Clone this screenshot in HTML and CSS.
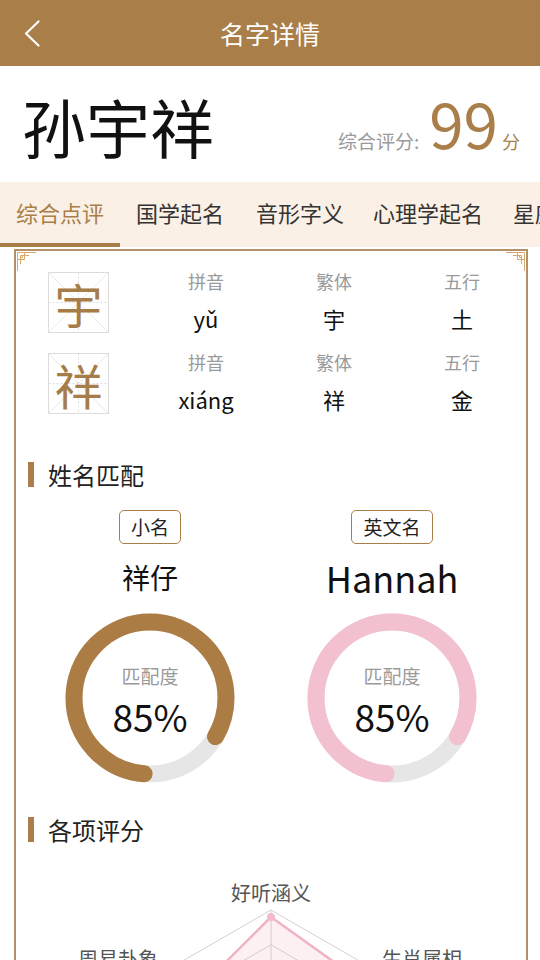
FILE: index.html
```html
<!DOCTYPE html>
<html lang="zh-CN">
<head>
<meta charset="utf-8">
<title>名字详情</title>
<link rel="stylesheet" href="styles.css">
</head>
<body>
<div class="page">
  <header class="topbar">
    <div class="back">
      <svg width="16" height="27" viewBox="0 0 16 27"><polyline points="14.5,1.5 2,13.5 14.5,25.5" fill="none" stroke="#fff" stroke-width="2.2" stroke-linecap="round" stroke-linejoin="round"/></svg>
    </div>
    <h1 class="title">名字详情</h1>
    <div></div>
  </header>

  <section class="hero">
    <div class="fullname">孙宇祥</div>
    <div class="score"><span class="score-label">综合评分:</span><span class="score-num">99</span><span class="score-unit">分</span></div>
  </section>

  <nav class="tabs">
    <span class="tab active">综合点评</span>
    <span class="tab">国学起名</span>
    <span class="tab">音形字义</span>
    <span class="tab tab-long">心理学起名</span>
    <span class="tab">星座起名</span>
  </nav>

  <main class="card">
    <svg class="corner tl" width="22" height="22" viewBox="0 0 22 22"><path d="M1.5 20V1.5H20M4.5 13V4.5H13M1.5 8.5H8.5V1.5M4.5 6.5H6.5V4.5" fill="none" stroke="#D8A76C" stroke-width="1"/></svg>
    <svg class="corner tr" width="22" height="22" viewBox="0 0 22 22"><path d="M1.5 20V1.5H20M4.5 13V4.5H13M1.5 8.5H8.5V1.5M4.5 6.5H6.5V4.5" fill="none" stroke="#D8A76C" stroke-width="1"/></svg>

    <div class="char-row">
      <div class="char-box">
        <svg class="grid" width="61" height="61" viewBox="0 0 61 61"><rect x="0.5" y="0.5" width="60" height="60" fill="none" stroke="#dcdcdc"/><path d="M0.5 0.5L60.5 60.5M60.5 0.5L0.5 60.5" stroke="#e8e8e8" stroke-width="1"/><path d="M30.5 0.5V60.5M0.5 30.5H60.5" stroke="#dcdcdc" stroke-width="1" stroke-dasharray="2 2"/></svg>
        <span class="char">宇</span>
      </div>
      <div class="attrs">
        <div class="attr"><div class="attr-label">拼音</div><div class="attr-value">yǔ</div></div>
        <div class="attr"><div class="attr-label">繁体</div><div class="attr-value">宇</div></div>
        <div class="attr"><div class="attr-label">五行</div><div class="attr-value">土</div></div>
      </div>
    </div>
    <div class="char-row">
      <div class="char-box">
        <svg class="grid" width="61" height="61" viewBox="0 0 61 61"><rect x="0.5" y="0.5" width="60" height="60" fill="none" stroke="#dcdcdc"/><path d="M0.5 0.5L60.5 60.5M60.5 0.5L0.5 60.5" stroke="#e8e8e8" stroke-width="1"/><path d="M30.5 0.5V60.5M0.5 30.5H60.5" stroke="#dcdcdc" stroke-width="1" stroke-dasharray="2 2"/></svg>
        <span class="char">祥</span>
      </div>
      <div class="attrs">
        <div class="attr"><div class="attr-label">拼音</div><div class="attr-value">xiáng</div></div>
        <div class="attr"><div class="attr-label">繁体</div><div class="attr-value">祥</div></div>
        <div class="attr"><div class="attr-label">五行</div><div class="attr-value">金</div></div>
      </div>
    </div>

    <h2 class="sec-title first">姓名匹配</h2>
    <div class="match">
      <div class="match-col">
        <span class="tag">小名</span>
        <div class="match-name">祥仔</div>
        <div class="ring">
          <svg width="170" height="170" viewBox="0 0 170 170"><circle cx="85" cy="85" r="76" fill="none" stroke="#E6E6E6" stroke-width="17"/><circle cx="85" cy="85" r="76" fill="none" stroke="#AB7D45" stroke-width="17" stroke-linecap="round" stroke-dasharray="392 478" stroke-dashoffset="-6" transform="rotate(90 85 85)"/></svg>
          <div class="ring-text"><div class="ring-label">匹配度</div><div class="ring-value">85%</div></div>
        </div>
      </div>
      <div class="match-col">
        <span class="tag">英文名</span>
        <div class="match-name en">Hannah</div>
        <div class="ring">
          <svg width="170" height="170" viewBox="0 0 170 170"><circle cx="85" cy="85" r="76" fill="none" stroke="#E6E6E6" stroke-width="17"/><circle cx="85" cy="85" r="76" fill="none" stroke="#F2C0CE" stroke-width="17" stroke-linecap="round" stroke-dasharray="392 478" stroke-dashoffset="-6" transform="rotate(90 85 85)"/></svg>
          <div class="ring-text"><div class="ring-label">匹配度</div><div class="ring-value">85%</div></div>
        </div>
      </div>
    </div>

    <h2 class="sec-title second">各项评分</h2>
    <svg class="radar" width="510" height="320" viewBox="0 0 510 320">
      <g fill="none" stroke="#d2d2d2" stroke-width="1">
        <polygon points="255,61 355.5,119 355.5,235 255,293 154.5,235 154.5,119"/>
        <polygon points="255,95.8 325.3,136.4 325.3,217.6 255,258.2 184.7,217.6 184.7,136.4"/>
        <polygon points="255,130.6 295.2,153.8 295.2,200.2 255,223.4 214.8,200.2 214.8,153.8"/>
        <path d="M255 177L255 61M255 177L355.5 119M255 177L355.5 235M255 177L255 293M255 177L154.5 235M255 177L154.5 119"/>
      </g>
      <polygon points="255,68 339.4,128.3 335.4,223.4 255,264 184.7,217.6 185.7,137" fill="rgba(240,170,190,0.18)" stroke="#F0B3C4" stroke-width="2.5" stroke-linejoin="round"/>
      <circle cx="255" cy="68" r="4" fill="#F2BACA"/>
      <g class="radar-label">
        <text x="255" y="43" text-anchor="middle" dominant-baseline="central">好听涵义</text>
        <text x="366" y="109" text-anchor="start" dominant-baseline="central">生肖属相</text>
        <text x="366" y="246" text-anchor="start" dominant-baseline="central">五格数理</text>
        <text x="255" y="312" text-anchor="middle" dominant-baseline="central">八字五行</text>
        <text x="142" y="246" text-anchor="end" dominant-baseline="central">音律字形</text>
        <text x="142" y="109" text-anchor="end" dominant-baseline="central">周易卦象</text>
      </g>
    </svg>
  </main>
</div>
</body>
</html>
```

FILE: styles.css
```css
html, body {
  margin: 0;
  padding: 0;
  background: #fff;
}

body {
  font-family: "Noto Sans CJK SC", "Noto Sans", sans-serif;
  color: #111;
}

.page {
  width: 540px;
  height: 960px;
  overflow: hidden;
}

/* Top bar */
.topbar {
  height: 66px;
  background: #A97E48;
  display: grid;
  grid-template-columns: 1fr auto 1fr;
  align-items: center;
}

.back {
  padding-left: 24px;
  display: flex;
  align-items: center;
}

.back svg {
  display: block;
}

.title {
  margin: 0;
  font-size: 25px;
  font-weight: 400;
  line-height: 1;
  color: #fff;
}

/* Hero */
.hero {
  height: 116px;
  display: flex;
  align-items: flex-end;
  justify-content: space-between;
  padding: 0 20px 0 22px;
  box-sizing: border-box;
}

.fullname {
  font-size: 64px;
  line-height: 1;
  color: #111;
  margin-bottom: 25px;
}

.score {
  display: flex;
  align-items: baseline;
  margin-bottom: 29px;
}

.score-label {
  font-size: 19px;
  line-height: 1;
  color: #9a9a9a;
}

.score-num {
  font-size: 62px;
  line-height: 1;
  color: #A97E48;
  margin: 0 4px 0 10px;
}

.score-unit {
  font-size: 18px;
  line-height: 1;
  color: #A97E48;
}

/* Tabs */
.tabs {
  height: 65px;
  background: #FBF0E6;
  display: flex;
  white-space: nowrap;
  overflow: hidden;
}

.tab {
  flex: none;
  padding: 0 16px 4px;
  font-size: 22px;
  line-height: 61px;
  color: #333;
}

.tab.tab-long {
  padding-left: 13px;
  padding-right: 14px;
}

.tab.active {
  color: #A97E48;
  box-shadow: inset 0 -4px 0 #A97E48;
}

/* Card */
.card {
  position: relative;
  display: block;
  margin: 2px 12px 0 14px;
  border: 2px solid #B39166;
  border-bottom: 0;
  padding-top: 21px;
}

.corner {
  position: absolute;
  top: 0;
  display: block;
}

.corner.tl {
  left: 0;
}

.corner.tr {
  right: 0;
  transform: scaleX(-1);
}

.char-row {
  display: flex;
  align-items: flex-start;
  padding-left: 32px;
}

.char-row + .char-row {
  margin-top: 20px;
}

.char-box {
  width: 61px;
  height: 61px;
  display: grid;
  place-items: center;
}

.char-box > * {
  grid-area: 1 / 1;
}

.grid {
  display: block;
}

.char {
  font-size: 48px;
  line-height: 1;
  color: #A67C48;
}

.attrs {
  display: flex;
  margin-left: 33px;
}

.attr {
  width: 128px;
  text-align: center;
}

.attr-label {
  font-size: 18px;
  line-height: 18px;
  color: #9a9a9a;
}

.attr-value {
  font-size: 22px;
  line-height: 26px;
  margin-top: 15px;
  color: #111;
}

/* Section titles */
.sec-title {
  display: flex;
  align-items: center;
  margin: 0 0 0 12px;
  font-size: 24px;
  font-weight: 400;
  line-height: 25px;
  color: #222;
}

.sec-title::before {
  content: "";
  width: 6px;
  height: 25px;
  background: #A97E48;
  margin-right: 14px;
}

.sec-title.first {
  margin-top: 48px;
}

.sec-title.second {
  margin-top: 34px;
}

/* Match */
.match {
  display: flex;
  padding: 0 13px;
  margin-top: 23px;
}

.match-col {
  width: 242px;
  display: flex;
  flex-direction: column;
  align-items: center;
}

.tag {
  display: block;
  height: 34px;
  box-sizing: border-box;
  border: 1.5px solid #A97E48;
  border-radius: 5px;
  padding: 0 11px;
  font-size: 19px;
  line-height: 31px;
  color: #222;
}

.match-name {
  font-size: 28px;
  line-height: 40px;
  margin-top: 13px;
  color: #111;
}

.match-name.en {
  font-size: 36px;
}

.ring {
  margin-top: 16px;
  width: 170px;
  height: 170px;
  display: grid;
}

.ring > * {
  grid-area: 1 / 1;
}

.ring svg {
  display: block;
}

.ring-text {
  display: flex;
  flex-direction: column;
  align-items: center;
  padding-top: 53px;
}

.ring-label {
  font-size: 19px;
  line-height: 20px;
  color: #9a9a9a;
}

.ring-value {
  font-size: 37px;
  line-height: 44px;
  margin-top: 8px;
  color: #111;
}

/* Radar */
.radar {
  display: block;
  margin-top: 7px;
}

.radar-label text {
  font-family: "Noto Sans CJK SC", "Noto Sans", sans-serif;
  font-size: 20px;
  fill: #555;
}
```
